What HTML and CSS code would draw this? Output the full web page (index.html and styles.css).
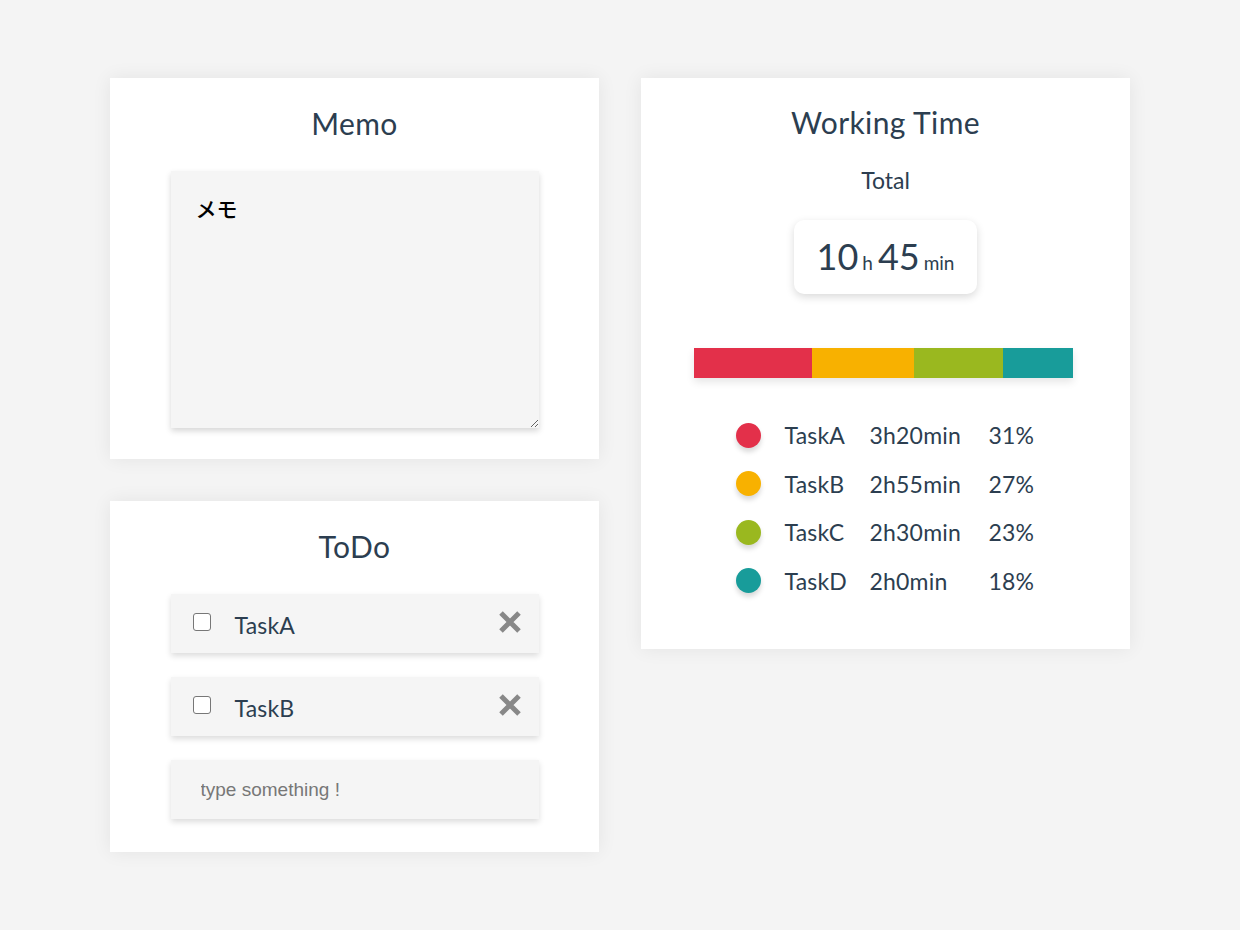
FILE: index.html
```html
<!DOCTYPE html>
<html lang="ja">
<head>
<meta charset="utf-8">
<title>Dashboard</title>
<link rel="stylesheet" href="styles.css">
</head>
<body>
<div class="page">
  <div class="col">
    <section class="card memo">
      <h2 class="title">Memo</h2>
      <textarea class="memo-area">メモ</textarea>
    </section>
    <section class="card todo">
      <h2 class="title">ToDo</h2>
      <div class="todo-list">
        <div class="todo-item">
          <span class="check"></span>
          <span class="todo-text">TaskA</span>
          <svg class="del" width="24" height="24" viewBox="0 0 24 24"><path d="M3 3 L21 21 M21 3 L3 21" stroke="#888" stroke-width="5" stroke-linecap="butt"/></svg>
        </div>
        <div class="todo-item">
          <span class="check"></span>
          <span class="todo-text">TaskB</span>
          <svg class="del" width="24" height="24" viewBox="0 0 24 24"><path d="M3 3 L21 21 M21 3 L3 21" stroke="#888" stroke-width="5" stroke-linecap="butt"/></svg>
        </div>
        <input class="todo-input" type="text" placeholder="type something !">
      </div>
    </section>
  </div>
  <div class="col">
    <section class="card wt">
      <h2 class="title">Working Time</h2>
      <div class="total-label">Total</div>
      <div class="total-box"><span class="big">10</span><span class="unit">h</span><span class="big">45</span><span class="unit">min</span></div>
      <div class="bar">
        <span class="seg red" style="width:118px"></span>
        <span class="seg orange" style="width:102px"></span>
        <span class="seg green" style="width:89px"></span>
        <span class="seg teal" style="width:70px"></span>
      </div>
      <div class="legend">
        <span class="dot red"></span><span>TaskA</span><span>3h20min</span><span>31%</span>
        <span class="dot orange"></span><span>TaskB</span><span>2h55min</span><span>27%</span>
        <span class="dot green"></span><span>TaskC</span><span>2h30min</span><span>23%</span>
        <span class="dot teal"></span><span>TaskD</span><span>2h0min</span><span>18%</span>
      </div>
    </section>
  </div>
</div>
</body>
</html>
```
FILE: styles.css
```css
* { box-sizing: border-box; }
html, body { margin: 0; padding: 0; }
body {
  background: #f4f4f4;
  font-family: Lato, "Noto Sans", sans-serif;
  color: #2c3e50;
  width: 1240px;
  height: 930px;
  overflow: hidden;
}
.page {
  display: flex;
  gap: 42px;
  padding: 78px 0 0 110px;
  align-items: flex-start;
}
.col {
  display: flex;
  flex-direction: column;
  gap: 42px;
  width: 489px;
}
.card {
  background: #fff;
  box-shadow: 0 0 18px rgba(0,0,0,0.07);
  display: flex;
  flex-direction: column;
  align-items: center;
}
.title {
  margin: 0;
  font-weight: 400;
  font-size: 30px;
  line-height: 36px;
  letter-spacing: 0.4px;
}
.memo { padding: 27px 0 31px; height: 381px; }
.memo-area {
  margin-top: 30px;
  width: 368px;
  height: 257px;
  border: none;
  outline: none;
  background: #f5f5f5;
  box-shadow: 0 3px 6px rgba(0,0,0,0.16);
  padding: 22px 25px;
  font-family: "Noto Sans CJK JP", sans-serif;
  font-weight: 500;
  font-size: 21px;
  color: #000;
  resize: both;
}
.todo { padding: 27px 0 31px; height: 351px; }
.todo-list {
  margin-top: 30px;
  display: flex;
  flex-direction: column;
  gap: 24px;
  width: 368px;
}
.todo-item {
  height: 59px;
  background: #f5f5f5;
  box-shadow: 0 3px 6px rgba(0,0,0,0.14);
  display: flex;
  align-items: center;
  padding: 0 17px 0 22px;
}
.check {
  width: 18px;
  height: 18px;
  border: 1.5px solid #777;
  border-radius: 3px;
  background: #fff;
  margin-top: -3px;
}
.todo-text {
  margin-left: 24px;
  font-size: 23px;
  flex: 1;
  padding-top: 3px;
  letter-spacing: 0.2px;
}
.del { margin-top: -4px; }
.todo-input {
  height: 59px;
  border: none;
  outline: none;
  background: #f5f5f5;
  box-shadow: 0 3px 6px rgba(0,0,0,0.14);
  padding: 0 30px;
  font-family: "Liberation Sans", Arial, sans-serif;
  font-size: 19px;
  color: #333;
}
.todo-input::placeholder { color: #777; }
.wt { padding: 26px 0 0; height: 571px; }
.total-label {
  margin-top: 25px;
  font-size: 23px;
  line-height: 30px;
}
.total-box {
  margin-top: 25px;
  width: 183px;
  height: 74px;
  border-radius: 10px;
  box-shadow: 0 3px 8px rgba(0,0,0,0.15);
  background: #fff;
  display: flex;
  align-items: baseline;
  justify-content: center;
  padding-top: 12px;
}
.big { font-size: 36px; line-height: 48px; }
.unit { font-size: 19px; margin: 0 5px 0 4px; }
.unit:last-child { margin-right: 0; }
.bar {
  margin-top: 54px;
  width: 379px;
  height: 30px;
  display: flex;
  box-shadow: 0 4px 8px rgba(0,0,0,0.1);
  margin-left: -4px;
}
.seg { display: block; height: 100%; }
.red { background: #e3304a; }
.orange { background: #f8b100; }
.green { background: #9ab81f; }
.teal { background: #189c9a; }
.legend {
  margin-top: 33px;
  display: grid;
  grid-template-columns: 49px 85px 119px 47px;
  grid-auto-rows: 48.5px;
  align-items: center;
  font-size: 23px;
  letter-spacing: 0.2px;
  width: 300px;
}
.dot {
  width: 25px;
  height: 25px;
  border-radius: 50%;
  box-shadow: 0 4px 5px rgba(0,0,0,0.15);
}
```
